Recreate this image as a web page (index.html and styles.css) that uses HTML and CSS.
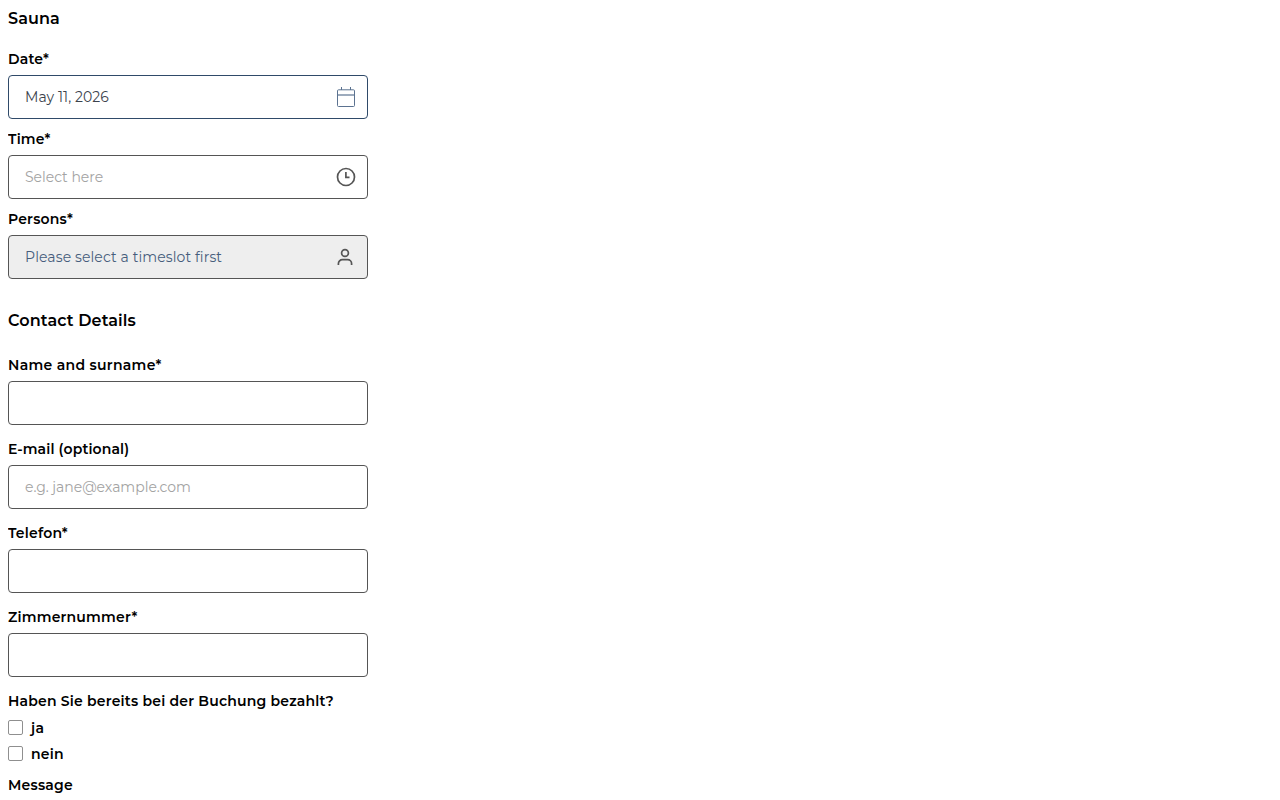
FILE: index.html
```html
<!DOCTYPE html>
<html lang="en">

<head>
    <meta charset="UTF-8">
    <meta name="viewport" content="width=device-width, initial-scale=1.0">
    <title>Sauna</title>
    <link rel="stylesheet" href="styles.css">
</head>

<body>
    <form class="booking">
        <section class="slot">
            <h2 class="title">Sauna</h2>
            <div class="field">
                <label class="label" for="date">Date*</label>
                <div class="control control-date">
                    <input class="input" id="date" type="text" value="May 11, 2026" readonly>
                    <svg class="icon" viewBox="0 0 20 20"><rect x="1.5" y="2.8" width="17" height="16.7" rx="1"/><path d="M1.5 8h17" stroke-width="1.2"/><path d="M5.5 0v3M14.5 0v3"/></svg>
                </div>
            </div>
            <div class="field">
                <label class="label" for="time">Time*</label>
                <div class="control">
                    <input class="input" id="time" type="text" placeholder="Select here" readonly>
                    <svg class="icon icon-bold" viewBox="0 0 20 20"><circle cx="10" cy="10" r="8.5"/><path d="M9.9 5v5.3h3.6"/></svg>
                </div>
            </div>
            <div class="field">
                <label class="label" for="persons">Persons*</label>
                <div class="control control-disabled">
                    <input class="input" id="persons" type="text" value="Please select a timeslot first" disabled>
                    <svg class="icon icon-bold" viewBox="0 0 20 20"><circle cx="9" cy="6" r="3.4"/><path d="M2.4 18v-1.3a4 4 0 0 1 4-4h5.2a4 4 0 0 1 4 4V18"/></svg>
                </div>
            </div>
        </section>

        <section class="contact">
            <h2 class="title">Contact Details</h2>
            <div class="field">
                <label class="label label-name" for="name">Name and surname*</label>
                <div class="control"><input class="input" id="name" type="text"></div>
            </div>
            <div class="field">
                <label class="label label-email" for="email">E-mail (optional)</label>
                <div class="control"><input class="input" id="email" type="text" placeholder="e.g. jane@example.com"></div>
            </div>
            <div class="field">
                <label class="label" for="phone">Telefon*</label>
                <div class="control"><input class="input" id="phone" type="text"></div>
            </div>
            <div class="field">
                <label class="label" for="room">Zimmernummer*</label>
                <div class="control"><input class="input" id="room" type="text"></div>
            </div>
            <div class="choices">
                <span class="label">Haben Sie bereits bei der Buchung bezahlt?</span>
                <label class="choice"><input class="check" type="checkbox"><span>ja</span></label>
                <label class="choice"><input class="check" type="checkbox"><span>nein</span></label>
            </div>
            <span class="label">Message</span>
        </section>
    </form>
</body>

</html>
```
FILE: styles.css
```css
* {
    box-sizing: border-box;
}

body {
    margin: 8px;
    background-color: #fff;
    color: #000;
    font-family: Montserrat, Inter, sans-serif;
    font-size: 14px;
    line-height: 20px;
}

.booking {
    width: 360px;
}

.title {
    margin: 0;
    padding: 1px 0 20px;
    font-size: 16px;
    font-weight: 600;
    line-height: 20px;
    letter-spacing: 0.12px;
}

.field {
    margin-bottom: 10px;
}

.contact {
    padding-top: 21px;
}

.contact .title {
    padding-bottom: 24px;
}

.contact .field {
    margin-bottom: 14px;
}

.label {
    display: block;
    font-weight: 600;
    letter-spacing: 0.2px;
}

.label-name {
    letter-spacing: 0.3px;
}

.label-email {
    letter-spacing: 0.12px;
}

/* input boxes */

.control {
    display: flex;
    align-items: center;
    height: 44px;
    margin-top: 6px;
    padding: 0 11px 0 16px;
    border: 1px solid #555;
    border-radius: 4px;
    color: #555;
}

.control-date {
    border-color: #2f4a69;
    color: #5b7290;
}

.control-disabled {
    background-color: #eee;
}

.input {
    flex: 1;
    min-width: 0;
    padding: 0;
    border: 0;
    outline: none;
    background: none;
    color: #3c434d;
    font: inherit;
    letter-spacing: 0.08px;
}

.input::placeholder {
    color: #a3a3a3;
    letter-spacing: -0.03px;
    opacity: 1;
}

.input:disabled {
    color: #465d7c;
    letter-spacing: 0.1px;
}

.icon {
    width: 20px;
    height: 20px;
    fill: none;
    stroke: currentColor;
    stroke-width: 1;
}

.icon-bold {
    stroke-width: 1.7;
}

/* checkboxes */

.choices {
    display: flex;
    flex-direction: column;
    gap: 6px;
    margin-bottom: 11px;
}

.choices .label {
    margin-bottom: 1px;
}

.choice {
    display: flex;
    gap: 8px;
    height: 20px;
    font-weight: 600;
    letter-spacing: 0.25px;
}

.check {
    appearance: none;
    width: 15px;
    height: 15px;
    margin: 2px 0 0;
    border: 1px solid #8f8f8f;
    border-radius: 2px;
}
```
